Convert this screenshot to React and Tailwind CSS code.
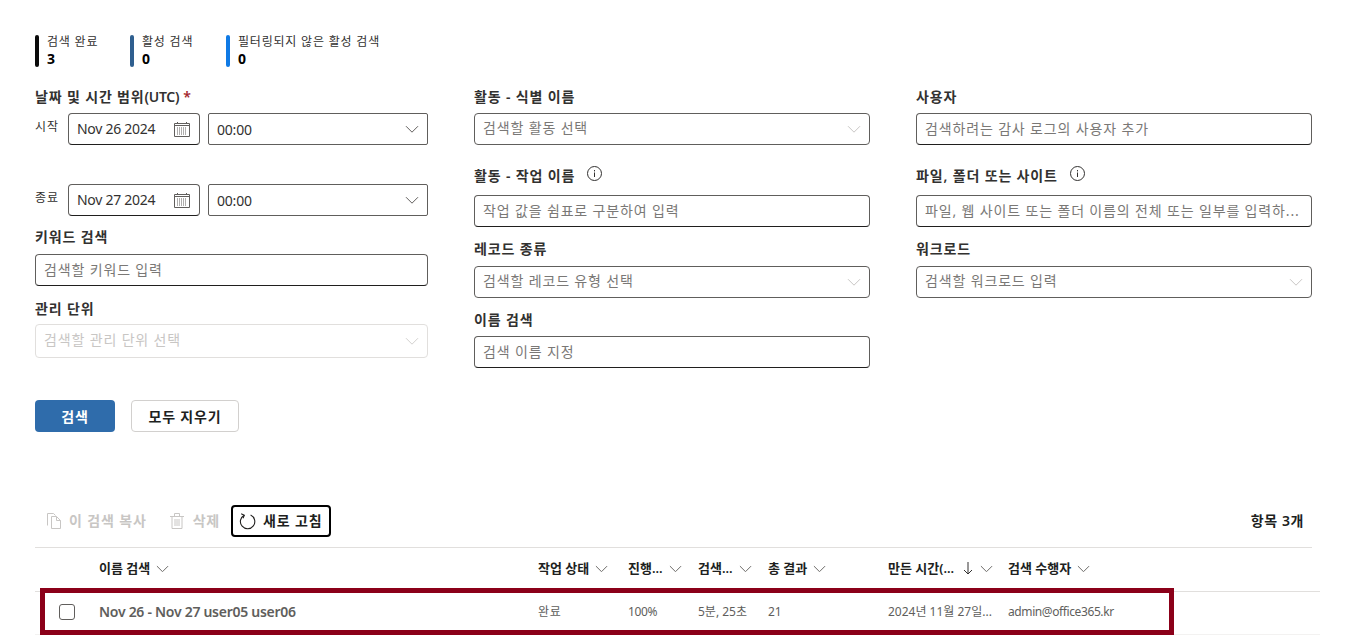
const font = { fontFamily: '"Noto Sans", "Noto Sans CJK KR", sans-serif' };

function Chevron({ className = "", size = 14 }) {
  return (
    <svg width={size} height={size * 0.6} viewBox="0 0 14 8" fill="none" className={className}>
      <path d="M1 1l6 6 6-6" stroke="currentColor" strokeWidth="1" />
    </svg>
  );
}

function CalendarIcon() {
  return (
    <svg width="16" height="16" viewBox="0 0 16 16" fill="none" className="text-[#605e5c]">
      <path d="M.5 2.5h15v13H.5z" stroke="currentColor" />
      <path d="M.5 4.5h15" stroke="currentColor" />
      <path d="M3.5 1v2M12.5 1v2" stroke="currentColor" />
      <path d="M3 7h10M3 9h10M3 11h10M3 13h10" stroke="currentColor" strokeDasharray="1 1" />
    </svg>
  );
}

function InfoIcon() {
  return (
    <svg width="15" height="15" viewBox="0 0 15 15" fill="none" className="text-[#323130]">
      <circle cx="7.5" cy="7.5" r="7" stroke="currentColor" />
      <path d="M7.5 6.5v4.5" stroke="currentColor" />
      <path d="M7.5 4v1.4" stroke="currentColor" />
    </svg>
  );
}

function CopyIcon() {
  return (
    <svg width="16" height="16" viewBox="0 0 16 16" fill="none" className="text-[#c8c6c4]">
      <path d="M1.5 12.5V.5h6l2 2" stroke="currentColor" />
      <path d="M5.5 15.5v-12h5l4 4v8z" stroke="currentColor" />
      <path d="M10.5 3.5v4h4" stroke="currentColor" />
    </svg>
  );
}

function TrashIcon() {
  return (
    <svg width="16" height="16" viewBox="0 0 16 16" fill="none" className="text-[#c8c6c4]">
      <path d="M1 3.5h14M5.5 3.5v-3h5v3M3 3.5v12h10v-12" stroke="currentColor" />
      <path d="M6 6v7M8 6v7M10 6v7" stroke="currentColor" />
    </svg>
  );
}

function RefreshIcon() {
  return (
    <svg width="17" height="17" viewBox="0 0 17 17" fill="none" className="text-[#201f1e]">
      <path d="M5.2 2.2a7.2 7.2 0 1 0 6.4-.2" stroke="currentColor" strokeWidth="1.1" />
      <path d="M2.2 .8l3.1 1.4-1.3 3" stroke="currentColor" strokeWidth="1.1" />
    </svg>
  );
}

function SortDown() {
  return (
    <svg width="10" height="13" viewBox="0 0 10 13" fill="none" className="text-[#323130]">
      <path d="M5 0v12M1 8l4 4 4-4" stroke="currentColor" />
    </svg>
  );
}

function Stat({ color, label, value, className }) {
  return (
    <div className={`flex gap-[8px] ${className}`}>
      <div className={`w-[4px] h-[32px] mt-[2px] rounded-full ${color}`} />
      <div className="flex flex-col pt-[1px]">
        <span className="text-[12px] leading-[15px] tracking-[0.8px] text-[#323130]">{label}</span>
        <span className="text-[14px] leading-[20px] font-bold text-black">{value}</span>
      </div>
    </div>
  );
}

function Label({ children, className = "" }) {
  return (
    <div className={`h-[20px] pb-[2px] flex items-center whitespace-pre text-[14px] tracking-[0.85px] font-semibold text-[#323130] ${className}`}>
      {children}
    </div>
  );
}

function TextBox({ placeholder }) {
  return (
    <div className="h-[32px] flex items-center pl-[8px] pr-[4px] pb-[2px] rounded-[4px] border border-[#605e5c] border-b-[#201f1e] text-[14px] tracking-[0.85px] text-[#7a7876]">
      <span className="whitespace-nowrap overflow-hidden">{placeholder}</span>
    </div>
  );
}

function SelectBox({ placeholder, disabled }) {
  if (disabled) {
    return (
      <div className="h-[34px] flex items-center justify-between px-[8px] rounded-[4px] border border-[#e1dfdd] text-[14px] tracking-[0.85px] text-[#c8c6c4]">
        <span className="-mt-[3px]">{placeholder}</span>
        <Chevron className="text-[#d2d0ce]" />
      </div>
    );
  }
  return (
    <div className="h-[32px] flex items-center justify-between px-[8px] rounded-[4px] border border-[#605e5c] text-[14px] tracking-[0.85px] text-[#7a7876]">
      <span className="-mt-[3px]">{placeholder}</span>
      <Chevron className="text-[#c8c6c4]" />
    </div>
  );
}

function DateRow({ label, date, className = "" }) {
  return (
    <div className={`flex ${className}`}>
      <span className="w-[33px] pt-[4px] text-[12px] leading-[20px] tracking-[1px] text-[#323130]">{label}</span>
      <div className="w-[132px] h-[32px] flex items-center justify-between pl-[8px] pr-[9px] rounded-[4px] border border-[#605e5c] border-b-[#201f1e] text-[14px] tracking-[-0.28px] text-[#323130]">
        <span className="-mt-[2px]">{date}</span>
        <CalendarIcon />
      </div>
      <div className="ml-[8px] flex-1 h-[32px] flex items-center justify-between px-[8px] rounded-[2px] border border-[#605e5c] text-[14px] tracking-[-0.2px] text-[#323130]">
        <span>00:00</span>
        <Chevron className="text-[#605e5c]" />
      </div>
    </div>
  );
}

function Head({ children, className, sort }) {
  return (
    <div className={`flex items-center text-[13px] font-semibold text-[#201f1e] ${className}`}>
      <span className="whitespace-nowrap">{children}</span>
      {sort && <span className="ml-[9px] mr-[7px] flex"><SortDown /></span>}
      <Chevron size={13} className={`text-[#605e5c] ${sort ? "" : "ml-[6px]"}`} />
    </div>
  );
}

export default function App() {
  return (
    <div style={font} className="relative h-[641px] w-[1359px] overflow-hidden bg-white pl-[35px] pt-[33px]">
      <div className="flex h-[34px]">
        <Stat color="bg-[#0b0b0b]" label="검색 완료" value="3" className="w-[95px]" />
        <Stat color="bg-[#2f5f8f]" label="활성 검색" value="0" className="w-[96px]" />
        <Stat color="bg-[#0f7ae5]" label="필터링되지 않은 활성 검색" value="0" />
      </div>

      <div className="mt-[20px] grid grid-cols-[393px_396px_396px] gap-x-[46px]">
        <div>
          <Label className="mb-[6px]">
            날짜 및 시간 범위<span className="tracking-[-0.3px]">(UTC)</span>
            <span className="ml-[4px] text-[#a4262c]">*</span>
          </Label>
          <DateRow label="시작" date="Nov 26 2024" />
          <DateRow label="종료" date="Nov 27 2024" className="mt-[39px]" />
          <Label className="mt-[11px] mb-[7px]">키워드 검색</Label>
          <TextBox placeholder="검색할 키워드 입력" />
          <Label className="mt-[13px] mb-[5px]">관리 단위</Label>
          <SelectBox placeholder="검색할 관리 단위 선택" disabled />
        </div>
        <div>
          <Label className="mb-[6px]">활동 - 식별 이름</Label>
          <SelectBox placeholder="검색할 활동 선택" />
          <Label className="mt-[21px] mb-[9px]">
            활동 - 작업 이름<span className="ml-[12px] -mt-[3px] flex"><InfoIcon /></span>
          </Label>
          <TextBox placeholder="작업 값을 쉼표로 구분하여 입력" />
          <Label className="mt-[12px] mb-[7px]">레코드 종류</Label>
          <SelectBox placeholder="검색할 레코드 유형 선택" />
          <Label className="mt-[12px] mb-[6px]">이름 검색</Label>
          <TextBox placeholder="검색 이름 지정" />
        </div>
        <div>
          <Label className="mb-[6px]">사용자</Label>
          <TextBox placeholder="검색하려는 감사 로그의 사용자 추가" />
          <Label className="mt-[21px] mb-[9px]">
            파일, 폴더 또는 사이트<span className="ml-[12px] -mt-[3px] flex"><InfoIcon /></span>
          </Label>
          <TextBox placeholder="파일, 웹 사이트 또는 폴더 이름의 전체 또는 일부를 입력하..." />
          <Label className="mt-[12px] mb-[7px]">워크로드</Label>
          <SelectBox placeholder="검색할 워크로드 입력" />
        </div>
      </div>

      <div className="mt-[32px] flex gap-[16px]">
        <button className="h-[32px] w-[80px] rounded-[4px] bg-[#2f6cab] text-[14px] tracking-[0.85px] font-semibold text-white">검색</button>
        <button className="h-[32px] w-[108px] rounded-[4px] border border-[#d2d0ce] text-[14px] tracking-[0.85px] font-semibold text-[#201f1e]">모두 지우기</button>
      </div>

      <div className="mt-[73px] w-[1277px] h-[43px] flex items-start border-b border-[#e1dfdd]">
        <div className="h-[32px] ml-[11px] flex items-center text-[14px] tracking-[0.85px] font-semibold text-[#c8c6c4]">
          <CopyIcon />
          <span className="ml-[7px] -mt-[2px]">이 검색 복사</span>
        </div>
        <div className="h-[32px] ml-[22px] flex items-center text-[14px] tracking-[0.85px] font-semibold text-[#c8c6c4]">
          <TrashIcon />
          <span className="ml-[8px] -mt-[2px]">삭제</span>
        </div>
        <button className="h-[32px] w-[100px] ml-[11px] flex items-center pl-[6px] rounded-[4px] border-2 border-black text-[14px] tracking-[0.85px] font-semibold text-[#201f1e]">
          <RefreshIcon />
          <span className="ml-[7px] -mt-[2px]">새로 고침</span>
        </button>
        <span className="ml-auto mr-[8px] h-[32px] pb-[2px] flex items-center text-[14px] tracking-[0.6px] font-semibold text-[#201f1e]">항목 3개</span>
      </div>

      <div className="w-[1285px]">
        <div className="h-[44px] flex items-center border-b border-[#e1dfdd] pl-[64px] pb-[2px]">
          <Head className="w-[439px]">이름 검색</Head>
          <Head className="w-[90px]">작업 상태</Head>
          <Head className="w-[70px]">진행...</Head>
          <Head className="w-[70px]">검색...</Head>
          <Head className="w-[120px]">총 결과</Head>
          <Head className="w-[120px]" sort>만든 시간(...</Head>
          <Head>검색 수행자</Head>
        </div>
        <div className="h-[43px] flex items-center border-b border-[#f3f2f1] pb-[2px] text-[12px] text-[#605e5c]">
          <div className="w-[64px] pl-[24px]">
            <div className="h-[16px] w-[16px] rounded-[3px] border border-[#605e5c]" />
          </div>
          <div className="w-[439px] -mt-[2px] text-[14px] tracking-[-0.28px] font-semibold">Nov 26 - Nov 27 user05 user06</div>
          <div className="w-[90px] tracking-[0.8px]">완료</div>
          <div className="w-[70px] tracking-[-0.4px]">100%</div>
          <div className="w-[70px]">5분, 25초</div>
          <div className="w-[120px]">21</div>
          <div className="w-[120px]">2024년 11월 27일...</div>
          <div className="tracking-[-0.4px]">admin@office365.kr</div>
        </div>
      </div>

      <div className="absolute left-[40px] top-[588px] h-[47px] w-[1134px] border-[5px] border-[#8b0019]" />
    </div>
  );
}
